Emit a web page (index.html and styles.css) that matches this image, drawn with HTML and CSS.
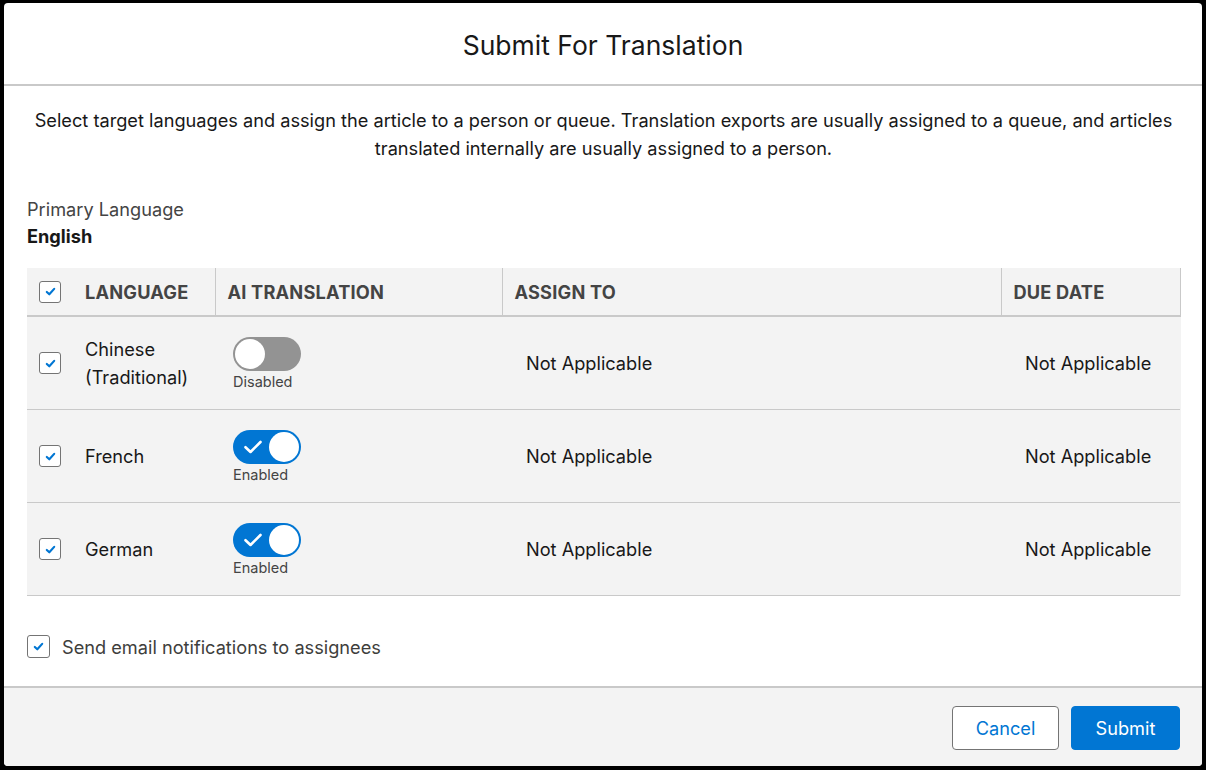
FILE: index.html
```html
<!DOCTYPE html>
<html lang="en">
<head>
  <meta charset="UTF-8">
  <meta name="viewport" content="width=device-width, initial-scale=1.0">
  <title>Submit For Translation</title>
  <link rel="stylesheet" href="styles.css">
</head>
<body>
  <div class="modal">
    <header class="modal-header">
      <h1>Submit For Translation</h1>
    </header>

    <div class="modal-body">
      <p class="intro">
        Select target languages and assign the article to a person or queue. Translation exports are usually assigned to a queue, and articles
        translated internally are usually assigned to a person.
      </p>

      <div class="primary">
        <div class="primary-label">Primary Language</div>
        <div class="primary-value">English</div>
      </div>

      <table class="lang-table">
        <colgroup>
          <col class="col-lang">
          <col class="col-ai">
          <col class="col-assign">
          <col class="col-due">
        </colgroup>
        <thead>
          <tr>
            <th>
              <div class="lang-cell">
                <span class="checkbox checked"><svg viewBox="0 0 12 12"><path d="M2.6 6.4 L4.9 8.6 L9.4 3.6"/></svg></span>
                <span>Language</span>
              </div>
            </th>
            <th>AI Translation</th>
            <th>Assign To</th>
            <th>Due Date</th>
          </tr>
        </thead>
        <tbody>
          <tr>
            <td>
              <div class="lang-cell">
                <span class="checkbox checked"><svg viewBox="0 0 12 12"><path d="M2.6 6.4 L4.9 8.6 L9.4 3.6"/></svg></span>
                <span>Chinese<br>(Traditional)</span>
              </div>
            </td>
            <td class="ai-cell">
              <div class="toggle">
                <span class="toggle-track"><span class="toggle-knob"></span></span>
                <span class="toggle-label">Disabled</span>
              </div>
            </td>
            <td class="assign-cell">Not Applicable</td>
            <td class="due-cell">Not Applicable</td>
          </tr>
          <tr>
            <td>
              <div class="lang-cell">
                <span class="checkbox checked"><svg viewBox="0 0 12 12"><path d="M2.6 6.4 L4.9 8.6 L9.4 3.6"/></svg></span>
                <span>French</span>
              </div>
            </td>
            <td class="ai-cell">
              <div class="toggle on">
                <span class="toggle-track">
                  <svg class="toggle-check" viewBox="0 0 20 16"><path d="M2.5 8.2 L7.5 13 L17.5 3"/></svg>
                  <span class="toggle-knob"></span>
                </span>
                <span class="toggle-label">Enabled</span>
              </div>
            </td>
            <td class="assign-cell">Not Applicable</td>
            <td class="due-cell">Not Applicable</td>
          </tr>
          <tr>
            <td>
              <div class="lang-cell">
                <span class="checkbox checked"><svg viewBox="0 0 12 12"><path d="M2.6 6.4 L4.9 8.6 L9.4 3.6"/></svg></span>
                <span>German</span>
              </div>
            </td>
            <td class="ai-cell">
              <div class="toggle on">
                <span class="toggle-track">
                  <svg class="toggle-check" viewBox="0 0 20 16"><path d="M2.5 8.2 L7.5 13 L17.5 3"/></svg>
                  <span class="toggle-knob"></span>
                </span>
                <span class="toggle-label">Enabled</span>
              </div>
            </td>
            <td class="assign-cell">Not Applicable</td>
            <td class="due-cell">Not Applicable</td>
          </tr>
        </tbody>
      </table>

      <label class="notify">
        <span class="checkbox checked big"><svg viewBox="0 0 12 12"><path d="M2.6 6.4 L4.9 8.6 L9.4 3.6"/></svg></span>
        <span>Send email notifications to assignees</span>
      </label>
    </div>

    <footer class="modal-footer">
      <button class="btn btn-neutral">Cancel</button>
      <button class="btn btn-brand">Submit</button>
    </footer>
  </div>
</body>
</html>
```

FILE: styles.css
```css
html, body {
  margin: 0;
  height: 100%;
}
body {
  background-color: #000;
  font-family: Inter, "Liberation Sans", Arial, sans-serif;
  color: #181818;
  padding: 3px 4px 4px 4px;
  box-sizing: border-box;
}
.modal {
  background-color: #fff;
  border-radius: 4px;
  height: 763px;
  display: flex;
  flex-direction: column;
  overflow: hidden;
}
.modal-header {
  height: 83px;
  border-bottom: 2px solid #c9c9c9;
  display: flex;
  align-items: center;
  justify-content: center;
  padding-top: 2px;
  box-sizing: border-box;
  flex: none;
}
.modal-header h1 {
  margin: 0;
  font-size: 26.5px;
  font-weight: 400;
}
.modal-body {
  flex: 1;
  padding: 20px 22px 0 23px;
}
.intro {
  margin: 0;
  text-align: center;
  font-size: 18.2px;
  line-height: 28px;
}
.primary {
  margin-top: 34px;
  font-size: 18.2px;
  line-height: 27px;
}
.primary-label {
  color: #444;
}
.primary-value {
  font-weight: 700;
}
.lang-table {
  margin-top: 18px;
  width: 1153px;
  table-layout: fixed;
  border-collapse: collapse;
  background-color: #f3f3f3;
  font-size: 18.2px;
}
.col-lang { width: 188px; }
.col-ai { width: 287px; }
.col-assign { width: 499px; }
.col-due { width: 179px; }
.lang-table th {
  height: 47px;
  padding: 0 12px;
  text-align: left;
  text-transform: uppercase;
  font-weight: 700;
  color: #444;
  border-right: 1px solid #c9c9c9;
  border-bottom: 2px solid #c9c9c9;
  letter-spacing: 0.2px;
}
.lang-table td {
  height: 92px;
  padding: 0 12px;
  border-bottom: 1px solid #c9c9c9;
  line-height: 28px;
}
.lang-cell {
  display: flex;
  align-items: center;
  gap: 24px;
}
.checkbox {
  width: 22px;
  height: 22px;
  flex: none;
  box-sizing: border-box;
  border: 1px solid #747474;
  border-radius: 3px;
  background-color: #fff;
  display: inline-flex;
  align-items: center;
  justify-content: center;
}
.checkbox svg {
  width: 13px;
  height: 13px;
  fill: none;
  stroke: #0176d3;
  stroke-width: 2;
  stroke-linecap: round;
  stroke-linejoin: round;
}
.checkbox.big {
  width: 23px;
  height: 23px;
}
.lang-table td.ai-cell {
  padding-left: 18px;
}
.toggle {
  display: inline-flex;
  flex-direction: column;
  align-items: flex-start;
  margin-top: 2px;
}
.toggle-track {
  position: relative;
  width: 68px;
  height: 34px;
  border-radius: 17px;
  background-color: #939393;
  display: block;
}
.toggle-knob {
  position: absolute;
  top: 2px;
  left: 2px;
  width: 30px;
  height: 30px;
  border-radius: 50%;
  background-color: #fff;
}
.toggle.on .toggle-track {
  background-color: #0176d3;
}
.toggle.on .toggle-knob {
  left: 36px;
}
.toggle-check {
  position: absolute;
  left: 10px;
  top: 9px;
  width: 20px;
  height: 16px;
  fill: none;
  stroke: #fff;
  stroke-width: 2.6;
  stroke-linecap: round;
  stroke-linejoin: round;
}
.toggle-label {
  font-size: 14.5px;
  line-height: 18px;
  color: #444;
  margin-top: 2px;
}
.lang-table td.assign-cell,
.lang-table td.due-cell {
  padding-left: 24px;
}
.notify {
  margin-top: 39px;
  display: flex;
  align-items: center;
  gap: 12px;
  font-size: 18.2px;
  color: #3e3e3c;
}
.modal-footer {
  flex: none;
  height: 80px;
  box-sizing: border-box;
  border-top: 2px solid #c9c9c9;
  background-color: #f3f3f3;
  display: flex;
  justify-content: flex-end;
  align-items: flex-start;
  gap: 12px;
  padding: 18px 22px 0 0;
}
.btn {
  height: 44px;
  border-radius: 4px;
  font-family: inherit;
  font-size: 18.2px;
  cursor: pointer;
}
.btn-neutral {
  width: 107px;
  background-color: #fff;
  color: #0176d3;
  border: 1px solid #747474;
}
.btn-brand {
  width: 109px;
  background-color: #0176d3;
  color: #fff;
  border: 1px solid #0176d3;
}
```
